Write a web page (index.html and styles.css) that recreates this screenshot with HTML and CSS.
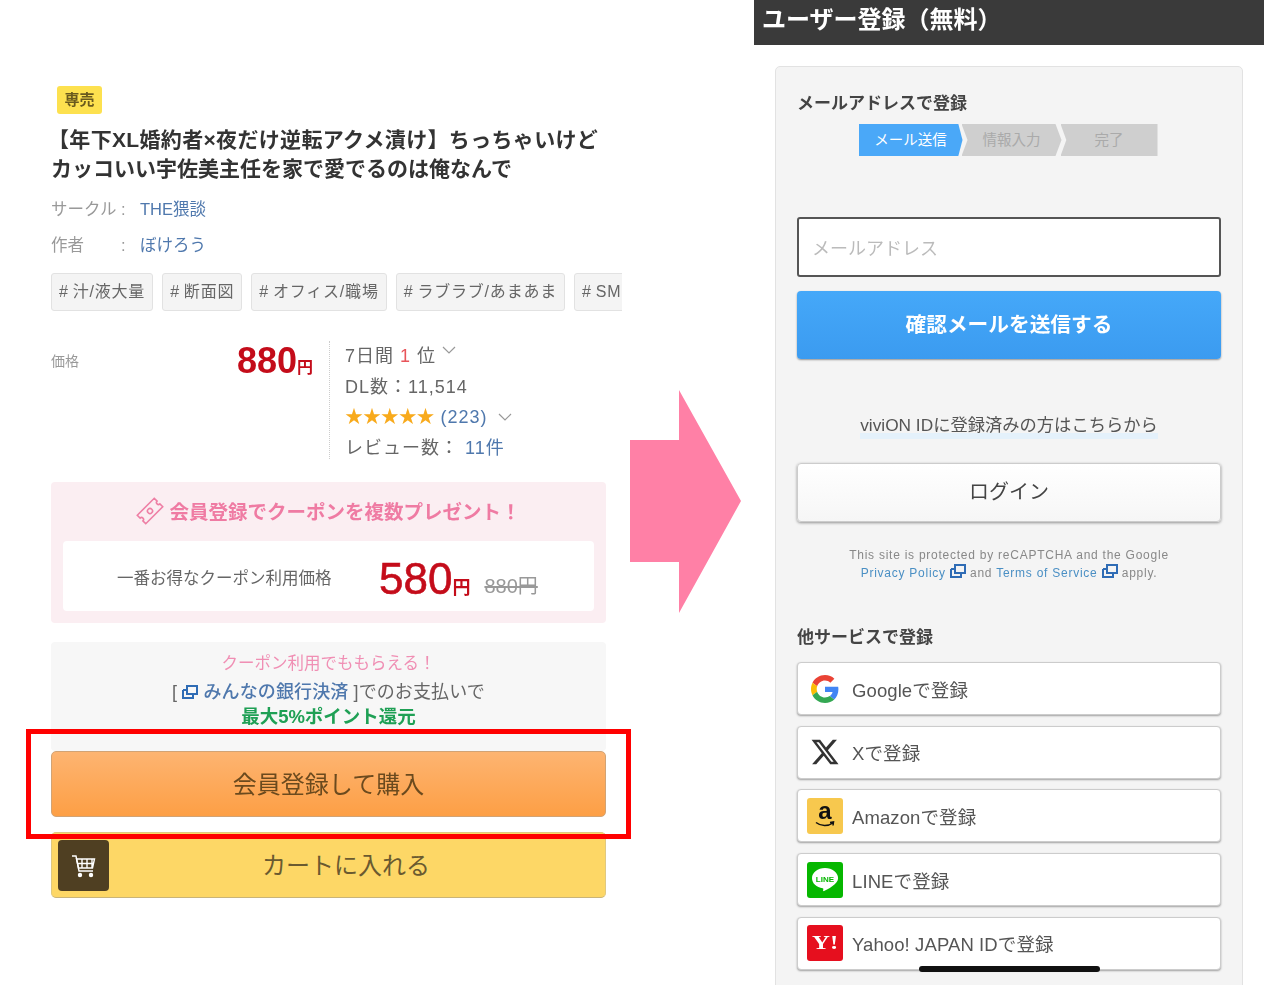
FILE: index.html
```html
<!DOCTYPE html>
<html lang="ja">
<head>
    <meta charset="UTF-8">
    <title>会員登録して購入</title>
    <link rel="stylesheet" href="styles.css">
</head>
<body>

<svg class="defs" width="0" height="0">
    <symbol id="ext" viewBox="0 0 16 14">
        <path d="M5 1h10v8H5z M1 5h4 M1 5v8h10V9" fill="none" stroke="currentColor" stroke-width="2"/>
    </symbol>
    <symbol id="chev" viewBox="0 0 14 8">
        <path d="M1 1l6 6 6-6" fill="none" stroke="#999" stroke-width="1.2"/>
    </symbol>
</svg>

<div class="page">

    <!-- left: product page -->
    <div class="product">
        <div class="badge">専売</div>
        <h1 class="title"><span class="title-first">【年下XL婚約者×夜だけ逆転アクメ漬け】ちっちゃいけど</span><br>カッコいい宇佐美主任を家で愛でるのは俺なんで</h1>

        <div class="meta">
            <span class="meta-label">サークル</span><span class="meta-colon">:</span><span class="link">THE猥談</span>
        </div>
        <div class="meta meta-author">
            <span class="meta-label">作者</span><span class="meta-colon">:</span><span class="link">ぼけろう</span>
        </div>

        <div class="tags">
            <span class="tag">#&thinsp;汁/液大量</span>
            <span class="tag">#&thinsp;断面図</span>
            <span class="tag">#&thinsp;オフィス/職場</span>
            <span class="tag">#&thinsp;ラブラブ/あまあま</span>
            <span class="tag tag-cut">#&thinsp;SM</span>
        </div>

        <div class="price-row">
            <div class="price-label">価格</div>
            <div class="price"><b>880</b><small>円</small></div>
            <div class="stats">
                <div class="stat">7日間 <em>1</em> 位 <svg class="chev chev-up"><use href="#chev"/></svg></div>
                <div class="stat">DL数：11,514</div>
                <div class="stat"><span class="stars">★★★★★</span> <span class="link">(223)</span> <svg class="chev"><use href="#chev"/></svg></div>
                <div class="stat">レビュー数： <span class="link">11件</span></div>
            </div>
        </div>

        <div class="coupon">
            <div class="coupon-head">
                <svg class="ticket" viewBox="0 0 28 28">
                    <g transform="rotate(-45 14 14)" fill="none" stroke="#ee7fa5" stroke-width="1.6">
                        <path d="M2 8h24v4a2 2 0 0 0 0 4v4H2v-4a2 2 0 0 0 0-4z"/>
                        <circle cx="14" cy="14" r="2.5"/>
                    </g>
                </svg>
                会員登録でクーポンを複数プレゼント！
            </div>
            <div class="coupon-body">
                <span class="coupon-label">一番お得なクーポン利用価格</span>
                <span class="coupon-price"><b>580</b><small>円</small></span>
                <s class="coupon-old">880円</s>
            </div>
        </div>

        <div class="point">
            <div class="point-head">クーポン利用でももらえる！</div>
            <div class="point-line">[ <svg class="ext"><use href="#ext"/></svg> <span class="link-dark">みんなの銀行決済</span> ]でのお支払いで</div>
            <div class="point-green">最大5%ポイント還元</div>
        </div>

        <div class="btn-buy">会員登録して購入</div>
        <div class="btn-cart">
            <span class="cart-icon">
                <svg width="28" height="28" viewBox="0 0 28 28" fill="none" stroke="#fff" stroke-width="1.4">
                    <path d="M2 4h4l3 15h14"/>
                    <path d="M6.5 7h18l-2 9H8.5z M12 7v9 M17 7v9 M22 7v9 M7 11.500h17"/>
                    <circle cx="10" cy="23" r="1.500" fill="#fff"/>
                    <circle cx="21" cy="23" r="1.500" fill="#fff"/>
                </svg>
            </span>
            カートに入れる
        </div>

        <div class="highlight"></div>
    </div>

    <svg class="arrow" width="111" height="223" viewBox="0 0 111 223">
        <path d="M0 50h49V0l62 111-62 112v-51H0z" fill="#ff80a6"/>
    </svg>

    <!-- right: register page -->
    <div class="register">
        <div class="register-head">ユーザー登録（無料）</div>
        <div class="card">
            <h2 class="card-title">メールアドレスで登録</h2>
            <div class="steps">
                <span class="step step-on">メール送信</span>
                <span class="step">情報入力</span>
                <span class="step step-last">完了</span>
            </div>
            <input class="mail" type="text" placeholder="メールアドレス">
            <div class="btn-send">確認メールを送信する</div>
            <div class="vivi"><span>viviON IDに登録済みの方はこちらから</span></div>
            <div class="btn-login">ログイン</div>
            <p class="recaptcha">This site is protected by reCAPTCHA and the Google<br><a>Privacy Policy <svg class="ext"><use href="#ext"/></svg></a> and <a>Terms of Service <svg class="ext"><use href="#ext"/></svg></a> apply.</p>
            <h2 class="card-title other">他サービスで登録</h2>

            <div class="social">
                <span class="sicon">
                    <svg width="28" height="28" viewBox="0 0 48 48">
                        <path fill="#EA4335" d="M24 9.500c3.540 0 6.710 1.220 9.210 3.600l6.850-6.850C35.900 2.380 30.470 0 24 0 14.620 0 6.510 5.380 2.560 13.220l7.980 6.190C12.430 13.720 17.740 9.500 24 9.500z"/>
                        <path fill="#4285F4" d="M46.980 24.550c0-1.570-.15-3.090-.38-4.550H24v9.020h12.940c-.58 2.960-2.260 5.480-4.780 7.180l7.730 6c4.510-4.180 7.090-10.360 7.090-17.650z"/>
                        <path fill="#FBBC05" d="M10.530 28.590c-.48-1.450-.76-2.990-.76-4.590s.27-3.140.76-4.590l-7.980-6.190C.92 16.460 0 20.120 0 24c0 3.880.92 7.540 2.560 10.780l7.970-6.190z"/>
                        <path fill="#34A853" d="M24 48c6.480 0 11.930-2.130 15.890-5.810l-7.730-6c-2.150 1.450-4.920 2.300-8.160 2.300-6.260 0-11.570-4.220-13.470-9.910l-7.980 6.190C6.510 42.620 14.620 48 24 48z"/>
                    </svg>
                </span>
                Googleで登録
            </div>
            <div class="social">
                <span class="sicon">
                    <svg width="30" height="30" viewBox="0 0 24 24"><path fill="#333" d="M18.244 2.250h3.308l-7.227 8.260 8.502 11.240H16.170l-5.214-6.817L4.990 21.750H1.680l7.730-8.835L1.254 2.250H8.080l4.713 6.231zm-1.161 17.520h1.833L7.084 4.126H5.117z"/></svg>
                </span>
                Xで登録
            </div>
            <div class="social">
                <span class="sicon sicon-amazon">
                    <span class="amazon-a">a</span>
                    <svg class="amazon-smile" width="22" height="8" viewBox="0 0 22 8"><path d="M2 1.500c5 4 12 4 17 .5 M16 1.500l3.500-.5-.5 3.500" fill="none" stroke="#111" stroke-width="1.500"/></svg>
                </span>
                Amazonで登録
            </div>
            <div class="social">
                <span class="sicon sicon-line">
                    <svg width="28" height="26" viewBox="0 0 28 26">
                        <path d="M14 1C6.800 1 1 5.500 1 11.200c0 5 4.500 9.200 10.700 10 .9.200.6 1.200.4 2.300-.1.700.4.900 1 .6 3-1.700 14-7 14-12.900C27 5.500 21.200 1 14 1z" fill="#fff"/>
                        <text x="14" y="14.500" text-anchor="middle" class="line-text">LINE</text>
                    </svg>
                </span>
                LINEで登録
            </div>
            <div class="social">
                <span class="sicon sicon-yahoo"><span class="yahoo-mark">Y!</span></span>
                Yahoo! JAPAN IDで登録
            </div>
        </div>
        <div class="home-bar"></div>
    </div>
</div>

</body>
</html>
```

FILE: styles.css
```css
html, body {
    margin: 0;
    padding: 0;
    height: 985px;
    overflow: hidden;
    background-color: #fff;
}
body {
    font-family: "Liberation Sans", "Noto Sans CJK JP", sans-serif;
    color: #555;
}
.defs {
    display: block;
    height: 0;
}
.page {
    display: flex;
    align-items: flex-start;
    height: 985px;
    overflow: hidden;
    filter: blur(0.4px);
}

/* left column */
.product {
    position: relative;
    width: 571px;
    margin-left: 51px;
    margin-right: 8px;
    padding-top: 86px;
    flex-shrink: 0;
}
.badge {
    width: 45px;
    height: 28px;
    margin-left: 6px;
    line-height: 27px;
    text-align: center;
    font-size: 15px;
    font-weight: bold;
    color: #6a5a1e;
    background-color: #fde14f;
    border-radius: 3px;
}
.title {
    margin: 11px 0 0;
    font-size: 21px;
    line-height: 29px;
    font-weight: bold;
    color: #333;
    white-space: nowrap;
}
.title-first {
    margin-left: -3px;
    letter-spacing: 0.33px;
}
.meta {
    display: flex;
    margin-top: 12px;
    height: 28px;
    line-height: 28px;
    font-size: 16.5px;
    color: #999;
}
.meta-author {
    margin-top: 8px;
}
.meta-label {
    width: 70px;
}
.meta-colon {
    width: 19px;
}
.link {
    color: #4f78ad;
}
.tags {
    display: flex;
    gap: 9px;
    margin-top: 14px;
    overflow: hidden;
}
.tag {
    flex-shrink: 0;
    height: 36px;
    padding: 0 7px;
    line-height: 36px;
    font-size: 16px;
    letter-spacing: 0.8px;
    color: #666;
    background-color: #f4f4f4;
    border: 1px solid #e2e2e2;
    border-radius: 3px;
    white-space: nowrap;
}
.tag-cut {
    width: 80px;
}
.price-row {
    display: flex;
    margin-top: 30px;
    height: 118px;
}
.price-label {
    width: 100px;
    padding-top: 9px;
    font-size: 14px;
    color: #999;
    line-height: 22px;
}
.price {
    width: 162px;
    text-align: right;
    color: #c40c1a;
    line-height: 40px;
}
.price b {
    font-size: 36px;
}
.price small {
    font-size: 16px;
    font-weight: bold;
}
.stats {
    margin-left: 16px;
    padding-left: 15px;
    border-left: 1px dotted #ccc;
    height: 118px;
}
.stat {
    height: 30.7px;
    line-height: 31px;
    font-size: 18px;
    letter-spacing: 1px;
    color: #666;
    white-space: nowrap;
}
.stat em {
    font-style: normal;
    color: #e8545a;
}
.stars {
    color: #f8aa1c;
    font-size: 18px;
    letter-spacing: -0.1px;
}
.chev {
    width: 14px;
    height: 8px;
    margin-left: 4px;
    vertical-align: 2px;
}
.chev-up {
    margin-left: 0;
    vertical-align: 8px;
}
.coupon {
    margin-top: 23px;
    width: 555px;
    height: 141px;
    box-sizing: border-box;
    padding: 0 12px;
    background-color: #fbeef2;
    border-radius: 4px;
}
.coupon-head {
    display: flex;
    align-items: center;
    justify-content: center;
    height: 59px;
    padding-bottom: 2px;
    box-sizing: border-box;
    font-size: 19.5px;
    font-weight: bold;
    color: #ef7ba3;
}
.ticket {
    width: 28px;
    height: 28px;
    margin-right: 5px;
}
.coupon-body {
    display: flex;
    align-items: center;
    height: 70px;
    padding-left: 54px;
    background-color: #fff;
    border-radius: 4px;
}
.coupon-label {
    margin-top: 2px;
    font-size: 16.5px;
    color: #666;
    width: 262px;
}
.coupon-price {
    margin-top: 6px;
    color: #c40c1a;
}
.coupon-price b {
    font-size: 44px;
    font-weight: normal;
    -webkit-text-stroke: 0.6px #c40c1a;
}
.coupon-price small {
    font-size: 18px;
    font-weight: bold;
}
.coupon-old {
    margin-left: 14px;
    margin-top: 16px;
    font-size: 20px;
    color: #999;
}
.point {
    margin-top: 19px;
    width: 555px;
    height: 109px;
    padding-top: 9px;
    box-sizing: border-box;
    text-align: center;
    background-color: #f7f7f7;
    border-radius: 4px;
}
.point-head {
    font-size: 16.5px;
    line-height: 24px;
    color: #f08fb4;
}
.point-line {
    font-size: 18px;
    line-height: 25px;
    margin-top: 5px;
    letter-spacing: 0.12px;
    color: #666;
}
.link-dark {
    color: #4f78ad;
    font-weight: 500;
}
.ext {
    width: 16px;
    height: 14px;
    color: #2f6cb5;
    vertical-align: -1px;
}
.point-green {
    font-size: 18.5px;
    line-height: 23px;
    font-weight: bold;
    color: #1fa055;
}
.btn-buy, .btn-cart {
    width: 555px;
    height: 66px;
    box-sizing: border-box;
    text-align: center;
    line-height: 65px;
    font-size: 24px;
    color: #6b4a1e;
    border-radius: 5px;
}
.btn-buy {
    background: linear-gradient(#fdb471, #fd9f45);
    border: 1px solid #d2a374;
}
.btn-cart {
    position: relative;
    margin-top: 15px;
    padding-left: 35px;
    color: #6a5a30;
    background: #fdd766;
    border: 1px solid #e0c880;
    border-bottom-color: #c9b478;
}
.cart-icon {
    position: absolute;
    left: 6px;
    top: 7px;
    display: flex;
    align-items: center;
    justify-content: center;
    width: 51px;
    height: 51px;
    background-color: #4f3f22;
    border-radius: 4px;
}
.highlight {
    position: absolute;
    left: -25px;
    top: 729px;
    width: 595px;
    height: 100px;
    border: 5px solid #f00;
}

.arrow {
    flex-shrink: 0;
    margin-top: 390px;
}

/* right column */
.register {
    position: relative;
    width: 510px;
    margin-left: 13px;
    flex-shrink: 0;
}
.register-head {
    height: 45px;
    line-height: 40px;
    padding-left: 8px;
    font-size: 24px;
    font-weight: bold;
    color: #fff;
    background-color: #3a3a3a;
}
.card {
    margin: 21px 21px 0;
    padding: 26px 21px 40px;
    background-color: #f4f4f4;
    border: 1px solid #e2e2e2;
    border-radius: 5px;
}
.card-title {
    margin: 0;
    font-size: 17px;
    line-height: 22px;
    font-weight: bold;
    color: #444;
}
.steps {
    display: flex;
    justify-content: center;
    margin-top: 9px;
    margin-left: -3px;
}
.step {
    width: 100px;
    height: 32px;
    margin-right: -1px;
    line-height: 32px;
    text-align: center;
    font-size: 14.5px;
    color: #aaa;
    background-color: #cfcfcf;
    clip-path: polygon(0 0, 94% 0, 100% 50%, 94% 100%, 0 100%, 6% 50%);
}
.step-on {
    width: 104px;
    color: #fff;
    background-color: #4aa8f8;
    clip-path: polygon(0 0, 96% 0, 100% 50%, 96% 100%, 0 100%);
}
.step-last {
    width: 97px;
    clip-path: polygon(0 0, 100% 0, 100% 100%, 0 100%, 6% 50%);
}
.mail {
    display: block;
    width: 100%;
    height: 60px;
    box-sizing: border-box;
    margin-top: 61px;
    padding: 4px 13px 0;
    font-family: inherit;
    font-size: 18px;
    background-color: #fff;
    border: 2px solid #555;
    border-radius: 3px;
    outline: none;
}
.mail::placeholder {
    color: #bbb;
}
.btn-send {
    margin-top: 14px;
    height: 68px;
    line-height: 67px;
    text-align: center;
    font-size: 20.7px;
    font-weight: bold;
    color: #fff;
    background: linear-gradient(#45a8f9, #3b9bf0);
    border-radius: 4px;
    box-shadow: 0 1px 2px rgba(0, 0, 0, 0.4);
}
.vivi {
    margin-top: 53px;
    text-align: center;
    font-size: 17.3px;
    line-height: 27px;
    height: 26px;
    color: #555;
}
.vivi span {
    display: inline-block;
    background: linear-gradient(transparent 78%, #e4f1fb 78%);
}
.btn-login {
    margin-top: 25px;
    height: 59px;
    line-height: 56px;
    text-align: center;
    font-size: 20px;
    color: #444;
    background: linear-gradient(#fff, #f6f6f6);
    border: 1px solid #ccc;
    box-sizing: border-box;
    border-radius: 4px;
    box-shadow: 0 1px 3px rgba(0, 0, 0, 0.4);
}
.recaptcha {
    margin: 24px 0 0;
    text-align: center;
    font-size: 12px;
    line-height: 18px;
    letter-spacing: 0.75px;
    color: #888;
}
.recaptcha a {
    color: #4a8fc4;
}
.other {
    margin-top: 45px;
}
.social {
    display: flex;
    align-items: center;
    height: 53px;
    box-sizing: border-box;
    margin-top: 10.7px;
    padding-left: 9px;
    font-size: 18.5px;
    letter-spacing: 0.1px;
    color: #555;
    background-color: #fff;
    border: 1px solid #ccc;
    border-radius: 4px;
    box-shadow: 0 1px 2px rgba(0, 0, 0, 0.35);
}
.other + .social {
    margin-top: 13px;
}
.sicon {
    position: relative;
    display: flex;
    align-items: center;
    justify-content: center;
    width: 36px;
    height: 36px;
    margin-right: 9px;
    border-radius: 3px;
}
.sicon-amazon {
    background-color: #f7c84e;
}
.amazon-a {
    margin-top: -9px;
    font-size: 24px;
    font-weight: bold;
    color: #111;
}
.amazon-smile {
    position: absolute;
    left: 7px;
    bottom: 5px;
}
.sicon-line {
    background-color: #06b700;
}
.line-text {
    font-size: 8px;
    font-weight: bold;
    fill: #06b700;
}
.sicon-yahoo {
    font-family: "Liberation Serif", serif;
    font-size: 19px;
    font-weight: bold;
    color: #fff;
    background-color: #e60f1e;
}
.yahoo-mark {
    display: block;
    transform: scaleX(1.3);
}
.home-bar {
    position: absolute;
    left: 165px;
    top: 966px;
    width: 181px;
    height: 6px;
    background-color: #111;
    border-radius: 3px;
}
```
